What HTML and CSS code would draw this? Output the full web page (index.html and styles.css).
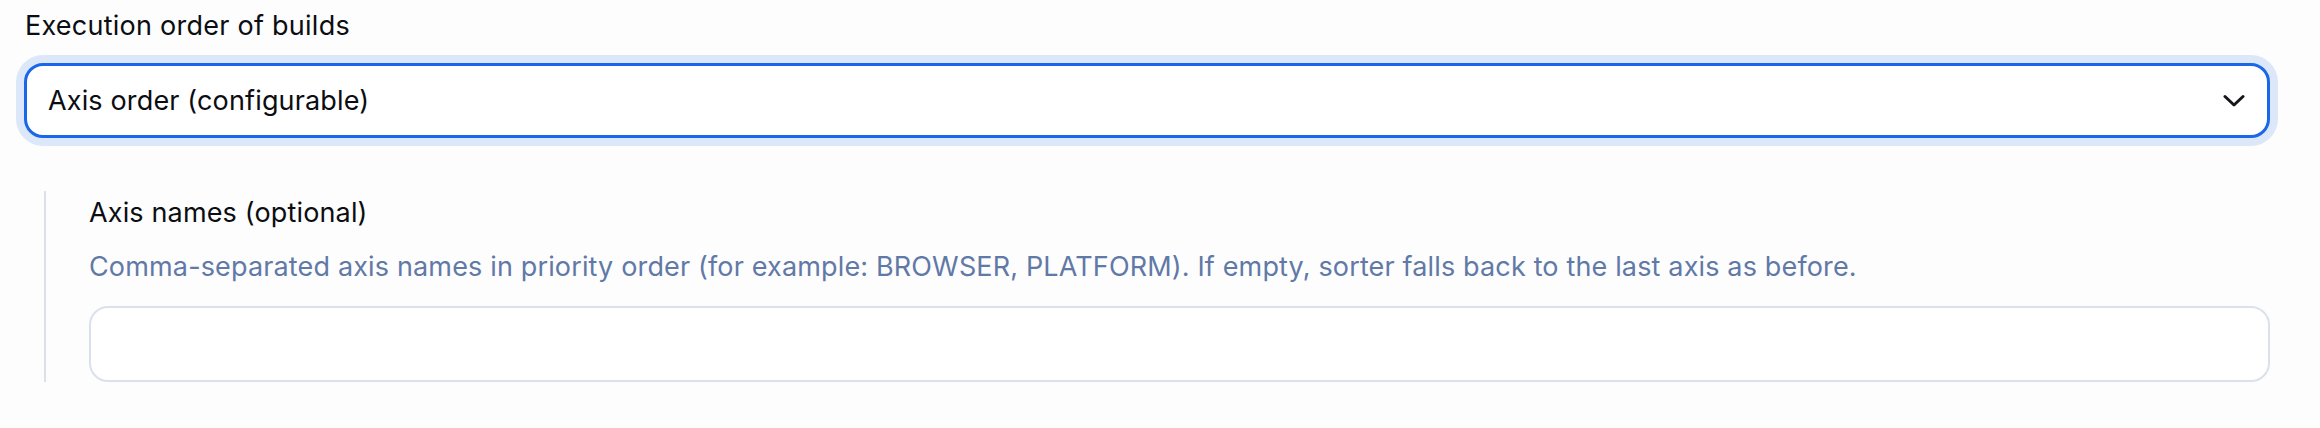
FILE: index.html
```html
<!DOCTYPE html>
<html lang="en">
<head>
<meta charset="utf-8">
<title>Execution order</title>
<link rel="stylesheet" href="styles.css">
</head>
<body>
<div class="page">
  <div class="field-label">Execution order of builds</div>
  <div class="select">
    <span class="select-value">Axis order (configurable)</span>
    <svg class="chevron" width="22" height="14" viewBox="0 0 22 14" aria-hidden="true">
      <path d="M2 2.5 L11 11 L20 2.5" fill="none" stroke="#14161b" stroke-width="3" stroke-linecap="round" stroke-linejoin="round"/>
    </svg>
  </div>
  <div class="nested">
    <div class="sub-label">Axis names (optional)</div>
    <div class="help">Comma-separated axis names in priority order (for example: BROWSER, PLATFORM). If empty, sorter falls back to the last axis as before.</div>
    <div class="text-input"></div>
  </div>
</div>
</body>
</html>
```

FILE: styles.css
```css
html, body {
  margin: 0;
  padding: 0;
  background: #fdfdfe;
}

body {
  font-family: "Inter", "Noto Sans", "Liberation Sans", sans-serif;
  color: #0b0d12;
  letter-spacing: 0.15px;
}

.page {
  display: flex;
  flex-direction: column;
  padding: 6px 50px 0 24px;
}

.field-label {
  font-size: 27px;
  line-height: 40px;
  margin-left: 1px;
  margin-bottom: 17px;
  letter-spacing: 0.25px;
}

.select {
  height: 75px;
  box-sizing: border-box;
  border: 3px solid #1b67e9;
  border-radius: 19px;
  box-shadow: 0 0 0 8px #dce7fa;
  background: #ffffff;
  display: flex;
  align-items: center;
  justify-content: space-between;
  padding: 0 22px 0 21px;
}

.select-value {
  font-size: 27px;
  line-height: 40px;
}

.chevron {
  display: block;
}

.nested {
  margin-top: 53px;
  margin-left: 20px;
  border-left: 2px solid #dbe1ec;
  padding: 0 0 0 43px;
  display: flex;
  flex-direction: column;
}

.sub-label {
  font-size: 27px;
  line-height: 40px;
  margin-top: 2px;
}

.help {
  font-size: 27px;
  line-height: 40px;
  color: #6179a6;
  margin-top: 14px;
}

.text-input {
  margin-top: 19px;
  height: 76px;
  box-sizing: border-box;
  border: 2px solid #dae1ec;
  border-radius: 19px;
  background: #ffffff;
}
```
